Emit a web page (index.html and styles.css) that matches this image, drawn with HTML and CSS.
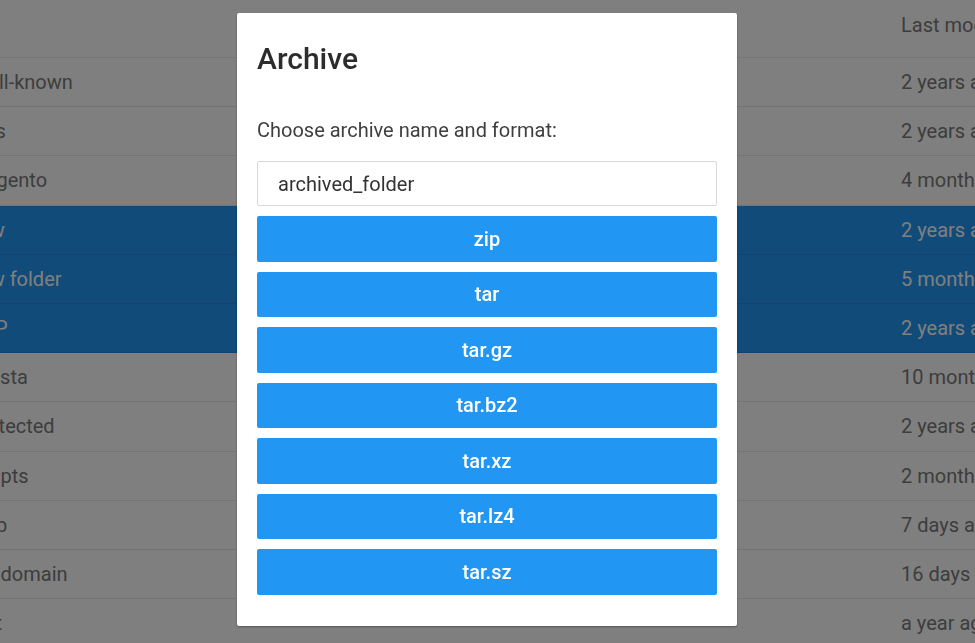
FILE: index.html
```html
<!DOCTYPE html>
<html lang="en">
<head>
    <meta charset="UTF-8">
    <meta name="viewport" content="width=device-width, initial-scale=1.0">
    <title>File Browser | Archive</title>
    <link rel="stylesheet" href="styles.css">
</head>
<body>

<!-- file listing behind the dialog -->
<div class="listing">
  <div class="row header">
    <div class="name"></div>
    <div class="modified">Last modified</div>
  </div>
  <div class="row"><div class="name">.well-known</div><div class="modified">2 years ago</div></div>
  <div class="row"><div class="name">logs</div><div class="modified">2 years ago</div></div>
  <div class="row"><div class="name">magento</div><div class="modified">4 months ago</div></div>
  <div class="row selected"><div class="name">new</div><div class="modified">2 years ago</div></div>
  <div class="row selected"><div class="name">new folder</div><div class="modified">5 months ago</div></div>
  <div class="row selected"><div class="name">PHP</div><div class="modified">2 years ago</div></div>
  <div class="row"><div class="name">cuesta</div><div class="modified">10 months ago</div></div>
  <div class="row"><div class="name">Protected</div><div class="modified">2 years ago</div></div>
  <div class="row"><div class="name">scripts</div><div class="modified">2 months ago</div></div>
  <div class="row"><div class="name">Web</div><div class="modified">7 days ago</div></div>
  <div class="row"><div class="name">subdomain</div><div class="modified">16 days ago</div></div>
  <div class="row"><div class="name">test</div><div class="modified">a year ago</div></div>
</div>

<div class="overlay"></div>

<!-- archive dialog -->
<div class="card floating">
  <div class="card-title">
    <h2>Archive</h2>
  </div>
  <div class="card-content">
    <p>Choose archive name and format:</p>
    <input class="input" type="text" value="archived_folder">
  </div>
  <div class="card-action">
    <button class="button">zip</button>
    <button class="button">tar</button>
    <button class="button">tar.gz</button>
    <button class="button">tar.bz2</button>
    <button class="button">tar.xz</button>
    <button class="button">tar.lz4</button>
    <button class="button">tar.sz</button>
  </div>
</div>

</body>
</html>
```

FILE: styles.css
```css
body {
  font-family: Roboto, "Liberation Sans", sans-serif;
  margin: 0;
  padding: 0;
  background: #fff;
  color: #7a7a7a;
  overflow: hidden;
  height: 643px;
}

/* list behind the dialog, scrolled a little to the right */
.listing {
  margin-left: -32px;
}

.row {
  display: flex;
  align-items: center;
  height: 48.2px;
  border-bottom: 1px solid #e8e8e8;
  font-size: 20px;
}

.row.header {
  height: 44px;
  align-items: flex-start;
  padding-top: 13px;
  border-bottom-color: #eee;
}

.row.selected {
  background: #2196f3;
  color: #fff;
  border-bottom-color: #1e88e5;
}

.row .name {
  flex: 1;
  white-space: nowrap;
}

.row .modified {
  width: 74px;
  white-space: nowrap;
}

.overlay {
  position: fixed;
  inset: 0;
  background: rgba(0, 0, 0, 0.5);
}

/* dialog */
.card {
  background: #fff;
  border-radius: 2px;
  box-shadow: 0 1px 3px rgba(0, 0, 0, 0.12), 0 1px 2px rgba(0, 0, 0, 0.24);
}

.card.floating {
  position: fixed;
  top: 13px;
  left: 237px;
  width: 500px;
  box-sizing: border-box;
  padding: 0 20px 31px;
}

.card-title h2 {
  margin: 0;
  padding-top: 27px;
  font-size: 30px;
  line-height: 38px;
  font-weight: 500;
  color: #2c2c2c;
}

.card-content p {
  margin: 0;
  padding-top: 38px;
  font-size: 20px;
  line-height: 28px;
  color: #3f3f3f;
}

.input {
  display: block;
  width: 100%;
  box-sizing: border-box;
  height: 45px;
  margin-top: 17px;
  padding: 0 20px;
  border: 1px solid #d9d9d9;
  border-radius: 2px;
  font-family: inherit;
  font-size: 20px;
  color: #333;
  outline: none;
}

.card-action {
  display: flex;
  flex-direction: column;
  gap: 10px;
  padding-top: 10px;
}

.button {
  height: 45.5px;
  border: 0;
  border-radius: 2px;
  background: #2196f3;
  color: #fff;
  font-family: inherit;
  font-size: 20px;
  font-weight: 500;
  cursor: pointer;
}
```
